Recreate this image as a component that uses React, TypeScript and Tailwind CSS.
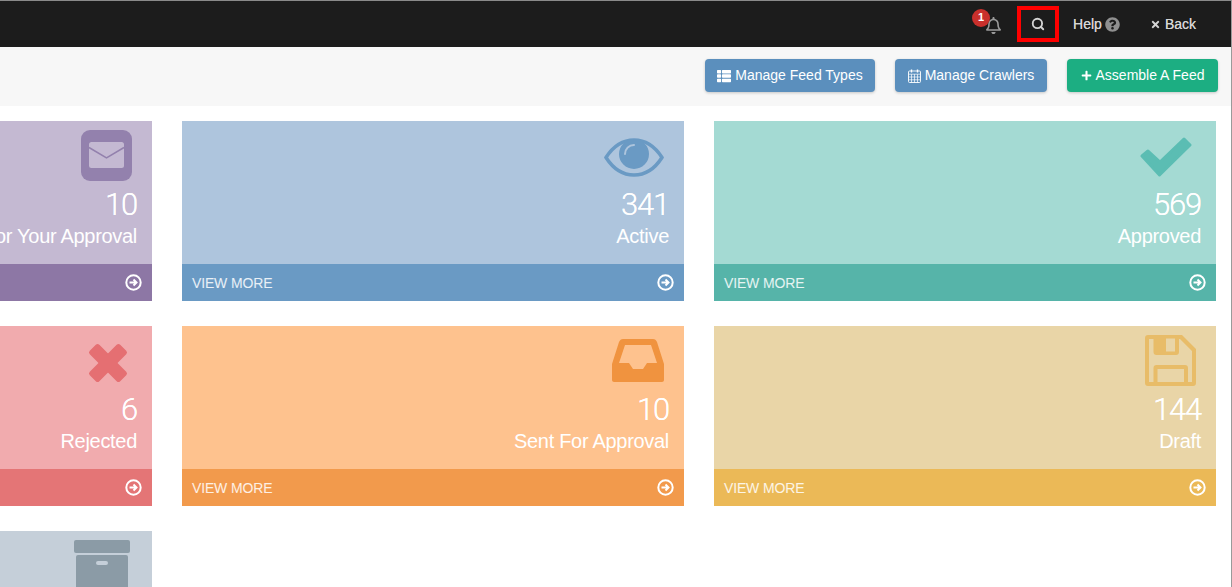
import { ReactNode } from "react";
import { FaThList, FaPlus, FaTimes, FaQuestionCircle, FaRegBell } from "react-icons/fa";
import { Search } from "lucide-react";

type Card = {
  count: number;
  label: string;
  bg: string;
  bar: string;
  iconBox: string;
  icon: ReactNode;
};

function MailIcon() {
  return (
    <svg width="51" height="51" viewBox="0 0 51 51">
      <rect width="51" height="51" rx="9" fill="#9381ad" />
      <rect x="8" y="12" width="35" height="26" rx="2.5" fill="#c4b9d2" />
      <path d="M8 17.5 L25.5 28 L43 17.5" fill="none" stroke="#9381ad" strokeWidth="1.5" />
    </svg>
  );
}

function EyeIcon() {
  return (
    <svg width="60" height="39" viewBox="0 0 60 39">
      <path d="M2 19.5 C10 7 20 2 30 2 C40 2 50 7 58 19.5 C50 32 40 37 30 37 C20 37 10 32 2 19.5 Z" fill="none" stroke="#6a9ac4" strokeWidth="3.5" />
      <circle cx="30" cy="16" r="15" fill="#6a9ac4" />
      <path d="M21 16 C21 11 25 7 30 7" fill="none" stroke="#aec5dd" strokeWidth="2" strokeLinecap="round" />
    </svg>
  );
}

function CheckIcon() {
  return (
    <svg width="52" height="40" viewBox="0 0 52 40">
      <polygon points="2,19 8,14 20,25 44,2 50,8 19.5,38" fill="#5bbdb3" stroke="#5bbdb3" strokeWidth="3" strokeLinejoin="round" />
    </svg>
  );
}

function CrossIcon() {
  return (
    <svg width="40" height="40" viewBox="0 0 40 40" fill="#e56f72">
      <rect x="-1.5" y="13.25" width="43" height="13.5" rx="2.5" transform="rotate(45 20 20)" />
      <rect x="-1.5" y="13.25" width="43" height="13.5" rx="2.5" transform="rotate(-45 20 20)" />
    </svg>
  );
}

function InboxIcon() {
  return (
    <svg width="52" height="43" viewBox="0 0 52 43">
      <path fillRule="evenodd" fill="#f0933f" d="M11 0 H41 C43 0 44 1 45 3 L52 25 V41 C52 42 51 43 50 43 H2 C1 43 0 42 0 41 V25 L7 3 C8 1 9 0 11 0 Z M13 6 L7 24 H17 L21 30 H31 L35 24 H45 L39 6 Z" />
    </svg>
  );
}

function SaveIcon() {
  return (
    <svg width="51" height="51" viewBox="0 0 51 51">
      <path fillRule="evenodd" fill="#e8bc68" d="M3 0 H37 L51 14 V48 C51 50 50 51 48 51 H3 C1 51 0 50 0 48 V3 C0 1 1 0 3 0 Z M4 4 V47 H8.5 V33 C8.5 31 9.5 30 11.5 30 H40 C42 30 43 31 43 33 V47 H47 V16 L35 4 H34 V17 C34 19 33 20 31 20 H11.5 C9.5 20 8.5 19 8.5 17 V4 Z M12.5 34 V47 H39 V34 Z M21 3.5 V16.5 H30 V3.5 Z" />
    </svg>
  );
}

function ArchiveIcon() {
  return (
    <svg width="56" height="80" viewBox="0 0 56 80">
      <rect width="56" height="13" rx="2" fill="#8b9ba6" />
      <rect x="2" y="15" width="52" height="65" rx="2" fill="#8b9ba6" />
      <rect x="22" y="21" width="12" height="4" rx="2" fill="#c5cfd9" />
    </svg>
  );
}

function ArrowCircle() {
  return (
    <svg width="17" height="17" viewBox="0 0 17 17">
      <circle cx="8.5" cy="8.5" r="7.2" fill="none" stroke="#fff" strokeWidth="2" />
      <path d="M4.5 8.5 H11 M8.5 5.5 L11.5 8.5 L8.5 11.5" fill="none" stroke="#fff" strokeWidth="2" />
    </svg>
  );
}

function CalendarIcon() {
  return (
    <svg width="13" height="14" viewBox="0 0 13 14" fill="none" stroke="#fff" strokeWidth="0.9">
      <rect x="0.5" y="2" width="12" height="11.5" rx="1" />
      <path d="M0.5 5.2 H12.5 M0.5 8 H12.5 M0.5 10.8 H12.5 M3.5 5.2 V13.5 M6.5 5.2 V13.5 M9.5 5.2 V13.5" strokeWidth="0.7" />
      <path d="M3.5 0.5 V3.5 M9.5 0.5 V3.5" strokeWidth="1.4" />
    </svg>
  );
}

const cards: Card[] = [
  { count: 10, label: "Waiting For Your Approval", bg: "bg-[#c4b9d2]", bar: "bg-[#8d77a5]", iconBox: "mt-[9px] mr-5", icon: <MailIcon /> },
  { count: 341, label: "Active", bg: "bg-[#aec5dd]", bar: "bg-[#6a9ac4]", iconBox: "mt-[17px] mr-5", icon: <EyeIcon /> },
  { count: 569, label: "Approved", bg: "bg-[#a4dad3]", bar: "bg-[#56b4a9]", iconBox: "mt-[16px] mr-6", icon: <CheckIcon /> },
  { count: 6, label: "Rejected", bg: "bg-[#f1abae]", bar: "bg-[#e47576]", iconBox: "mt-[17px] mr-6", icon: <CrossIcon /> },
  { count: 10, label: "Sent For Approval", bg: "bg-[#fec28e]", bar: "bg-[#f29a4c]", iconBox: "mt-[13px] mr-5", icon: <InboxIcon /> },
  { count: 144, label: "Draft", bg: "bg-[#e9d5a7]", bar: "bg-[#ebb957]", iconBox: "mt-[9px] mr-5", icon: <SaveIcon /> },
  { count: 32, label: "Archived", bg: "bg-[#c5cfd9]", bar: "bg-[#8b9ba6]", iconBox: "mt-[9px] mr-[22px]", icon: <ArchiveIcon /> },
];

function StatCard({ card }: { card: Card }) {
  return (
    <div className={`flex h-[180px] flex-col ${card.bg}`}>
      <div className="flex flex-1 flex-col items-end">
        <div className="h-[70px] w-full">
          <div className={`flex justify-end ${card.iconBox}`}>{card.icon}</div>
        </div>
        <div className="mr-[15px] font-['Roboto',sans-serif] text-[31px] font-light leading-[28px] tracking-[-1.2px] text-white [text-shadow:0_0_0.4px_#fff]">{card.count}</div>
        <div className="mr-[15px] mt-[5px] text-[20px] leading-[24px] tracking-[-0.3px] text-white">{card.label}</div>
      </div>
      <div className={`flex h-[37px] items-center justify-between px-[10px] ${card.bar}`}>
        <span className="pt-[1px] text-[14px] tracking-[-0.15px] text-white/85">VIEW MORE</span>
        <ArrowCircle />
      </div>
    </div>
  );
}

const shadow = "shadow-[0_1px_3px_rgba(0,0,0,0.2)]";

export default function App() {
  return (
    <div className="h-[587px] w-[1232px] overflow-hidden border-r border-[#9a9a9a] bg-white font-['Liberation_Sans',sans-serif]">
      {/* Top bar */}
      <div className="flex h-[47px] items-center justify-end border-t border-[#8a8a8a] bg-[#1c1c1c] text-[14px] text-[#d4d4d4]">
        <div className="relative mr-[12px] mt-[3px] flex h-6 w-6 items-center justify-center">
          <FaRegBell size={17} className="text-[#9a9a9a]" />
          <span className="absolute -left-[9px] -top-[5px] flex h-[18px] w-[18px] items-center justify-center rounded-full bg-[#c9302c] text-[11px] font-bold text-white">1</span>
        </div>
        <div className="mr-[14px] flex h-[36px] w-[42px] items-center justify-center border-[4px] border-[#ff0000]">
          <Search size={14} strokeWidth={3.2} className="text-[#d4d4d4]" />
        </div>
        <span className="[text-shadow:0_0_0.4px_#d4d4d4]">Help</span>
        <FaQuestionCircle size={15} className="ml-[3px] mr-[30px] text-[#8f8f8f]" />
        <FaTimes size={11} className="mr-[4px]" />
        <span className="mr-[35px] [text-shadow:0_0_0.4px_#d4d4d4]">Back</span>
      </div>

      {/* Action bar */}
      <div className="flex h-[59px] items-center justify-end gap-5 bg-[#f7f7f7] pb-[2px] pr-[13px] text-[14px] text-white [text-shadow:0_0_0.5px_#fff]">
        <button className={`flex h-[33px] w-[170px] items-center justify-center gap-[4px] rounded-[4px] bg-[#5b8fbd] ${shadow}`}>
          <FaThList size={14} />
          Manage Feed Types
        </button>
        <button className={`flex h-[33px] w-[152px] items-center justify-center gap-[4px] rounded-[4px] bg-[#5b8fbd] ${shadow}`}>
          <CalendarIcon />
          Manage Crawlers
        </button>
        <button className={`flex h-[33px] w-[151px] items-center justify-center gap-[4px] rounded-[4px] bg-[#1cae82] ${shadow}`}>
          <FaPlus size={11} />
          Assemble A Feed
        </button>
      </div>

      {/* Stat cards */}
      <div className="ml-[-350px] mt-[15px] grid grid-cols-[repeat(3,502px)] gap-x-[30px] gap-y-[25px]">
        {cards.map((card) => (
          <StatCard key={card.label} card={card} />
        ))}
      </div>
    </div>
  );
}
